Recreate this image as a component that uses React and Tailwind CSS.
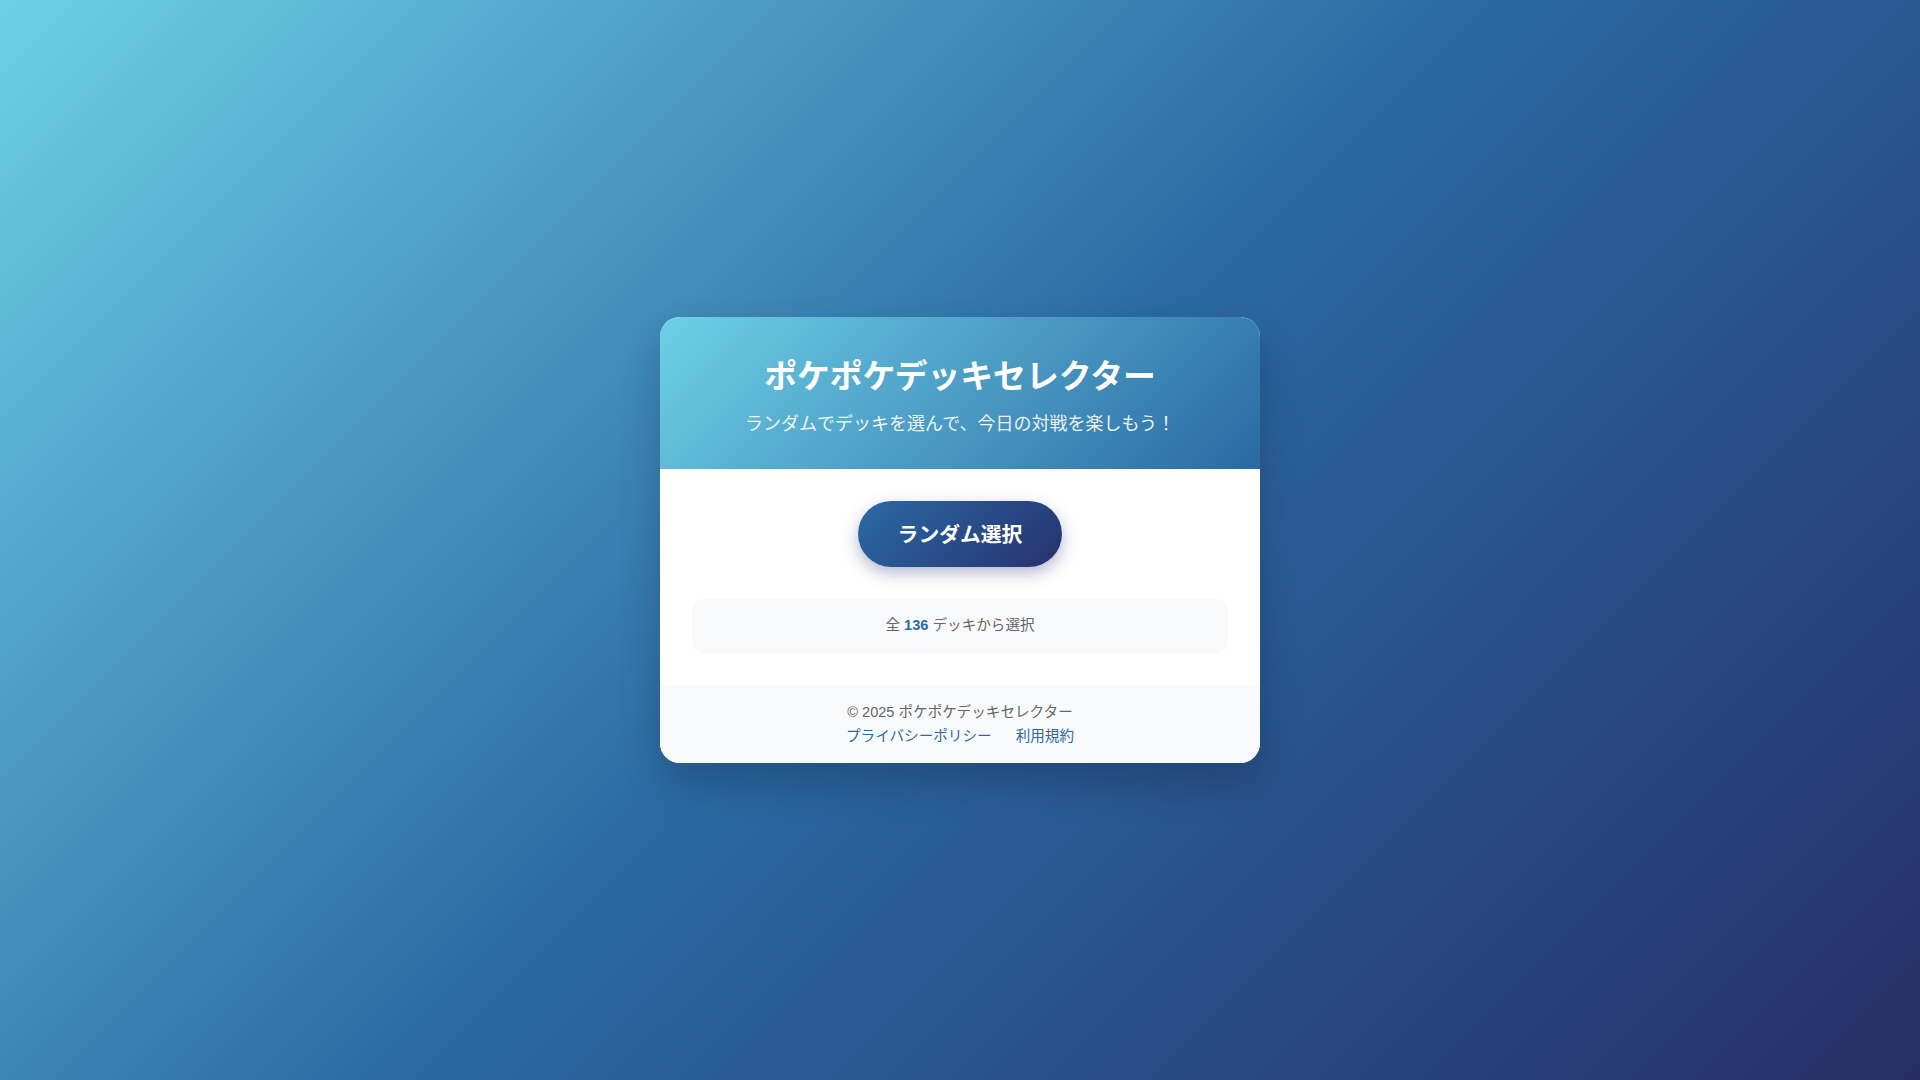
import React from "react";

export default function App() {
  const total = 136;

  return (
    <div
      className="min-h-screen w-full flex items-center justify-center bg-[linear-gradient(135deg,#6dd0e6_0%,#2a68a2_50%,#272e66_100%)]"
      style={{ fontFamily: '"Liberation Sans", "Noto Sans CJK JP", sans-serif' }}
    >
      <div className="w-[600px] bg-white rounded-[20px] overflow-hidden shadow-[0_20px_40px_rgba(0,0,0,0.2)]">
        {/* ヘッダー */}
        <div className="pt-10 pb-[31px] px-8 text-center text-white bg-[linear-gradient(135deg,#6dd0e6,#2a69a3)]">
          <h1 className="text-[32.8px] font-bold leading-[1.2] mb-[15px]">ポケポケデッキセレクター</h1>
          <p className="text-[18px] leading-[1.5] opacity-90">ランダムでデッキを選んで、今日の対戦を楽しもう！</p>
        </div>

        {/* 本体 */}
        <div className="p-8 flex flex-col items-center">
          <button
            type="button"
            className="px-10 h-[66px] rounded-full text-white text-[20.8px] font-bold bg-[linear-gradient(135deg,#2a6aa5,#27316e)] shadow-[0_6px_16px_rgba(40,50,112,0.35)]"
          >
            ランダム選択
          </button>

          <div className="mt-8 w-full h-[54px] rounded-xl bg-[#f8f9fa] flex items-center justify-center text-[14.6px] text-[#666]">
            全&nbsp;<span className="font-bold text-[#2a6aa5]">{total}</span>&nbsp;デッキから選択
          </div>
        </div>

        {/* フッター */}
        <div className="bg-[#f8f9fa] pt-[17px] pb-[15px] text-center text-[14.6px] leading-[1.5]">
          <p className="text-[#666] mb-0.5">© 2025 ポケポケデッキセレクター</p>
          <div className="flex justify-center gap-6">
            <a href="#" className="text-[#2a6aa5]">プライバシーポリシー</a>
            <a href="#" className="text-[#2a6aa5]">利用規約</a>
          </div>
        </div>
      </div>
    </div>
  );
}
